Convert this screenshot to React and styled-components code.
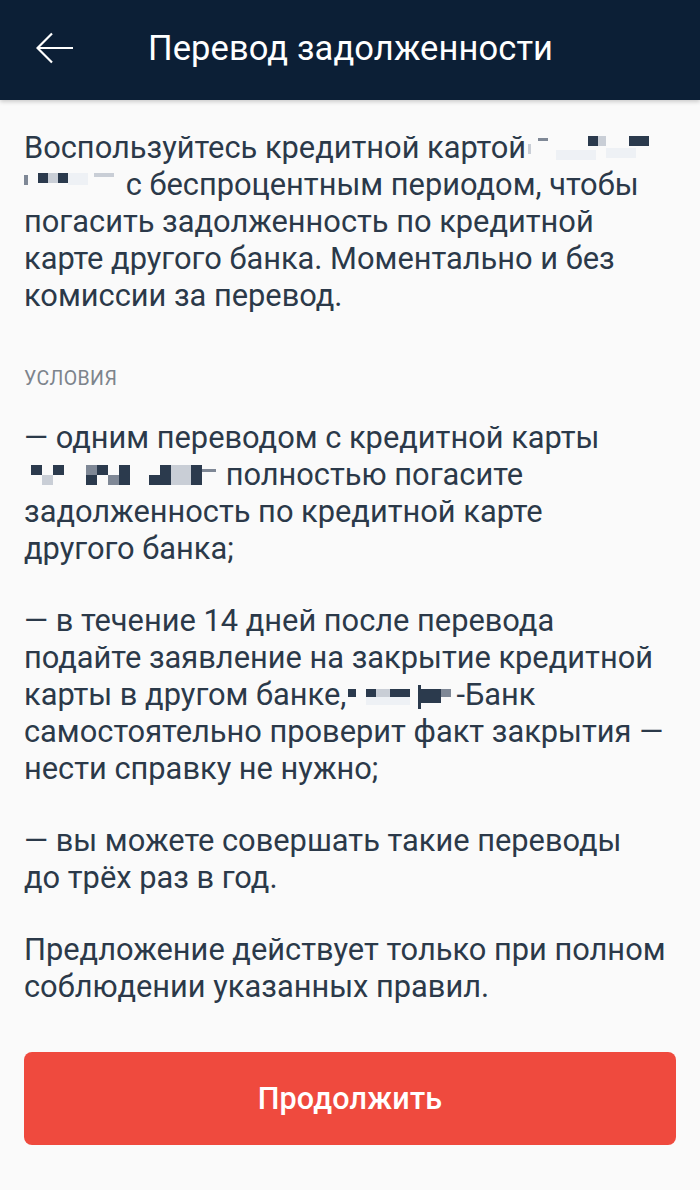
import React from 'react'
import styled, { createGlobalStyle } from 'styled-components'

const GlobalStyle = createGlobalStyle`
  html, body {
    margin: 0;
    padding: 0;
    background: #fafafa;
  }
  body {
    font-family: Roboto, "Noto Sans", Arial, sans-serif;
    -webkit-font-smoothing: antialiased;
  }
`

const Screen = styled.div`
  width: 700px;
  min-height: 1190px;
  background: #fafafa;
  display: flex;
  flex-direction: column;
`

const Header = styled.header`
  height: 100px;
  background: #0c1f36;
  display: flex;
  align-items: center;
  box-shadow: 0 2px 4px rgba(0, 0, 0, 0.18);
  flex-shrink: 0;
`

const BackButton = styled.button`
  width: 148px;
  height: 100px;
  border: 0;
  background: none;
  padding: 0 0 4px 36px;
  display: flex;
  align-items: center;
  cursor: pointer;
`

const Title = styled.h1`
  margin: 0 0 4px;
  color: #fff;
  font-size: 34.5px;
  font-weight: 400;
  letter-spacing: 0.1px;
`

const Content = styled.main`
  padding: 29px 24px 0;
  color: #2b3949;
  font-size: 30.8px;
  line-height: 37px;
`

const Paragraph = styled.p`
  margin: 0 0 ${({ $gap }) => ($gap === undefined ? 35 : $gap)}px;
`

const SectionLabel = styled.div`
  font-size: 19.5px;
  color: #7d848c;
  text-transform: uppercase;
  letter-spacing: 0.4px;
  line-height: 20px;
  margin: 55px 0 30px;
`

const PrimaryButton = styled.button`
  display: block;
  width: 100%;
  height: 93px;
  margin-top: 47px;
  border: 0;
  border-radius: 8px;
  background: #ef4a3e;
  color: #fff;
  font-family: inherit;
  font-size: 30.5px;
  font-weight: 500;
  letter-spacing: 0.2px;
  cursor: pointer;
`

const CensorSvg = styled.svg`
  display: inline-block;
  vertical-align: -4px;
`

const DARK = '#2b3a4d'
const MID = '#7f8896'
const LIGHT = '#c9ced6'
const PALE = '#eef1f5'

// pixel mosaics standing in for the hidden bank name
const Censor = ({ width, cells }) => (
  <CensorSvg width={width} height={26} viewBox={`0 0 ${width} 26`}>
    {cells.map(([x, y, w, h, c], i) => (
      <rect key={i} x={x} y={y} width={w} height={h} fill={c} />
    ))}
  </CensorSvg>
)

const BackArrow = () => (
  <svg width="38" height="32" viewBox="0 0 38 32" fill="none">
    <path d="M1.5 16H37" stroke="#fff" strokeWidth="2.2" />
    <path d="M16 1.5L1.5 16L16 30.5" stroke="#fff" strokeWidth="2.2" />
  </svg>
)

const App = () => (
  <>
    <GlobalStyle />
    <Screen>
      <Header>
        <BackButton aria-label="Назад">
          <BackArrow />
        </BackButton>
        <Title>Перевод задолженности</Title>
      </Header>
      <Content>
        <Paragraph $gap={0}>
          Воспользуйтесь кредитной картой
          <Censor
            width={128}
            cells={[
              [2, 8, 3, 10, LIGHT],
              [12, 2, 10, 3, MID],
              [30, 14, 40, 10, PALE],
              [62, 0, 10, 10, DARK],
              [72, 0, 8, 10, LIGHT],
              [80, 12, 30, 10, PALE],
              [103, 0, 20, 10, DARK],
            ]}
          />
          <br />
          <Censor
            width={94}
            cells={[
              [0, 2, 4, 10, MID],
              [14, 0, 10, 10, DARK],
              [24, 0, 10, 10, LIGHT],
              [34, 0, 10, 10, DARK],
              [44, 0, 20, 12, PALE],
              [70, 0, 20, 4, LIGHT],
            ]}
          />{' '}
          с беспроцентным периодом, чтобы
          <br />
          погасить задолженность по кредитной
          <br />
          карте другого банка. Моментально и без
          <br />
          комиссии за перевод.
        </Paragraph>

        <SectionLabel>Условия</SectionLabel>

        <Paragraph>
          — одним переводом с кредитной карты
          <br />
          <Censor
            width={194}
            cells={[
              [7, 2, 11, 10, DARK],
              [18, 12, 11, 10, LIGHT],
              [29, 2, 11, 10, DARK],
              [62, 2, 11, 10, MID],
              [73, 2, 11, 10, DARK],
              [62, 12, 11, 10, DARK],
              [84, 12, 11, 10, MID],
              [95, 2, 11, 20, DARK],
              [125, 12, 11, 10, DARK],
              [136, 2, 11, 20, DARK],
              [147, 2, 20, 20, LIGHT],
              [167, 2, 11, 20, DARK],
              [178, 6, 14, 3, MID],
            ]}
          />{' '}
          полностью погасите
          <br />
          задолженность по кредитной карте
          <br />
          другого банка;
        </Paragraph>

        <Paragraph>
          — в течение 14 дней после перевода
          <br />
          подайте заявление на закрытие кредитной
          <br />
          карты в другом банке,
          <Censor
            width={110}
            cells={[
              [2, 6, 8, 8, DARK],
              [20, 6, 10, 8, DARK],
              [30, 6, 14, 8, LIGHT],
              [44, 6, 20, 8, DARK],
              [20, 14, 44, 8, PALE],
              [72, 2, 3, 24, DARK],
              [75, 6, 20, 14, DARK],
              [95, 6, 10, 8, MID],
            ]}
          />
          -Банк
          <br />
          самостоятельно проверит факт закрытия —
          <br />
          нести справку не нужно;
        </Paragraph>

        <Paragraph>
          — вы можете совершать такие переводы
          <br />
          до трёх раз в год.
        </Paragraph>

        <Paragraph $gap={0}>
          Предложение действует только при полном
          <br />
          соблюдении указанных правил.
        </Paragraph>

        <PrimaryButton>Продолжить</PrimaryButton>
      </Content>
    </Screen>
  </>
)

export default App
